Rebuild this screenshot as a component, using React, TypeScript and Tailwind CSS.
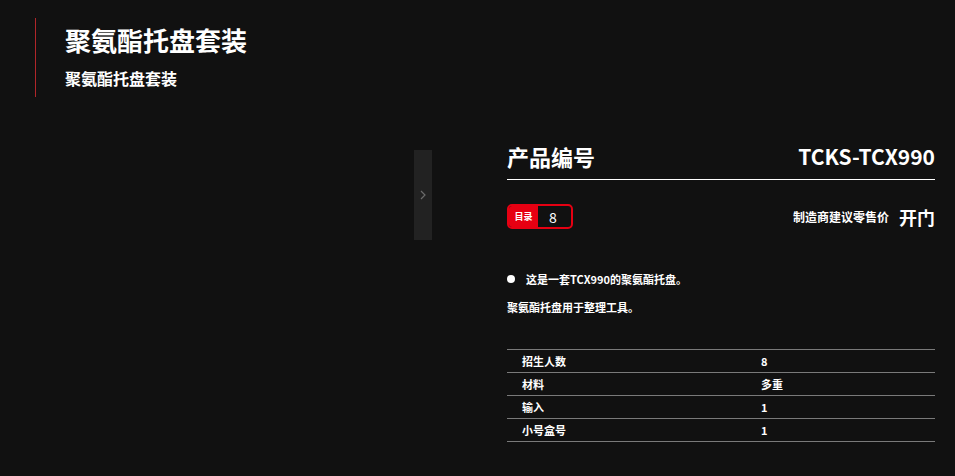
import React from "react";

const rows: [string, string][] = [
  ["招生人数", "8"],
  ["材料", "多重"],
  ["输入", "1"],
  ["小号盒号", "1"],
];

export default function App() {
  return (
    <div
      className="w-[955px] h-[476px] bg-[#111111] text-white overflow-hidden"
      style={{ fontFamily: '"Noto Sans CJK SC", "Noto Sans", sans-serif' }}
    >
      <div className="pt-[18px] pl-[35px]">
        <div className="border-l border-[#b0262a] pl-[29px] pt-[4px] pb-[7px]">
          <h1 className="text-[26px] leading-[36px] font-bold">聚氨酯托盘套装</h1>
          <h2 className="mt-[8px] text-[16px] leading-[24px] font-bold">聚氨酯托盘套装</h2>
        </div>
      </div>

      <div className="mt-[44px] flex pr-[20px]">
        <div className="w-[432px] shrink-0 flex justify-end">
          <div className="mt-[9px] w-[18px] h-[90px] bg-[#222222] flex items-center justify-center">
            <svg width="6" height="10" viewBox="0 0 6 10" fill="none">
              <path d="M1 1l4 4-4 4" stroke="#6b6b6b" strokeWidth="1.2" />
            </svg>
          </div>
        </div>

        <div className="ml-[75px] w-[428px]">
          <div className="flex items-center justify-between border-b border-white pb-[8px]">
            <span className="text-[22px] leading-[30px] font-bold">产品编号</span>
            <span className="text-[21px] leading-[30px] font-bold">TCKS-TCX990</span>
          </div>

          <div className="mt-[24px] flex items-center justify-between">
            <div className="flex h-[25px] w-[66px] rounded-[5px] border-2 border-[#e60012] overflow-hidden">
              <div className="w-[29px] bg-[#e60012] flex items-center justify-center text-[9px] font-bold leading-none">
                目录
              </div>
              <div className="flex-1 flex items-center justify-center pr-[3px] text-[14px] leading-none">8</div>
            </div>
            <div className="flex items-center">
              <span className="text-[12px] font-bold leading-[18px]">制造商建议零售价</span>
              <span
                className="ml-[10px] text-[18px] font-bold leading-[24px]"
                style={{ fontFamily: '"Noto Sans CJK JP", "Noto Sans CJK SC", sans-serif' }}
              >
                开门
              </span>
            </div>
          </div>

          <div className="mt-[40px] flex items-center h-[20px]">
            <span className="w-[8px] h-[8px] rounded-full bg-white" />
            <span className="ml-[11px] text-[11px] font-bold leading-[20px]">这是一套TCX990的聚氨酯托盘。</span>
          </div>
          <p className="mt-[8px] text-[11px] font-bold leading-[20px]">聚氨酯托盘用于整理工具。</p>

          <div className="mt-[32px] border-t border-[#7a7a7a]">
            {rows.map(([k, v]) => (
              <div
                key={k}
                className="flex items-center h-[23px] border-b border-[#7a7a7a] text-[11px] font-bold"
              >
                <span className="pl-[15px] w-[254px]">{k}</span>
                <span>{v}</span>
              </div>
            ))}
          </div>
        </div>
      </div>
    </div>
  );
}
